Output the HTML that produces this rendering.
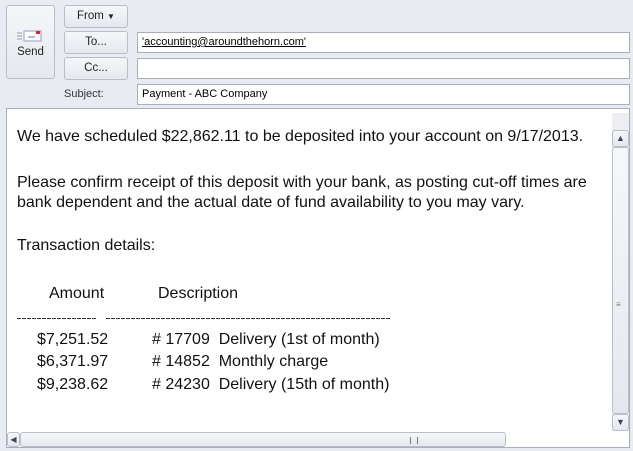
<!DOCTYPE html>
<html><head><style>
body{margin:0;width:633px;height:451px;background:#e8ecf2;font-family:"Liberation Sans",sans-serif;position:relative;overflow:hidden}
.a{position:absolute}
.btn{position:absolute;border:1px solid #b8bfc9;border-radius:3px;background:linear-gradient(#f6f7f9,#e4e8ee);font-size:11.5px;color:#222;text-align:center;box-sizing:border-box}
.fld{position:absolute;left:137px;width:493px;height:21px;background:#fff;border:1px solid #a9afb8;box-sizing:border-box;font-size:11px;padding:3px 4px}
.t{position:absolute;font-size:16px;color:#111;white-space:nowrap}
.dash{position:absolute;height:1px;background:repeating-linear-gradient(90deg,#333 0 4px,transparent 4px 5px)}
</style></head><body>
<div class="btn" style="left:6px;top:5px;width:49px;height:74px">
<svg width="30" height="16" style="position:absolute;left:9px;top:22px"><rect x="8" y="3" width="17" height="10" fill="#fff" stroke="#8ea0b8"/><line x1="12" y1="9" x2="19" y2="9" stroke="#6080a8"/><rect x="20" y="3" width="4" height="3" fill="#d23"/><line x1="1" y1="5" x2="6" y2="5" stroke="#99a"/><line x1="1" y1="8" x2="6" y2="8" stroke="#99a"/><line x1="1" y1="11" x2="6" y2="11" stroke="#99a"/></svg>
<div style="position:absolute;top:40px;width:100%">Send</div></div>
<div class="btn" style="left:64px;top:5px;width:64px;height:23px;line-height:21px">From <span style="font-size:8px">&#9660;</span></div>
<div class="btn" style="left:64px;top:31px;width:64px;height:23px;line-height:21px">To...</div>
<div class="btn" style="left:64px;top:57px;width:64px;height:23px;line-height:21px">Cc...</div>
<div class="fld" style="top:32px"><span style="text-decoration:underline">'accounting@aroundthehorn.com'</span></div>
<div class="fld" style="top:58px"></div>
<div class="a" style="left:64px;top:88px;font-size:11px;color:#333">Subject:</div>
<div class="fld" style="top:84px">Payment - ABC Company</div>
<div class="a" style="left:6px;top:108px;width:624px;height:340px;background:#fff;border:1px solid #a9afb8;box-sizing:border-box"></div>
<div class="a" style="left:612px;top:113px;width:17px;height:318px;background:#eceef1"></div>
<div class="btn" style="left:612px;top:130px;width:17px;height:17px;font-size:9px;line-height:15px;color:#445">&#9650;</div>
<div class="btn" style="left:612px;top:147px;width:17px;height:267px"></div>
<div class="btn" style="left:612px;top:414px;width:17px;height:17px;font-size:9px;line-height:15px;color:#445">&#9660;</div>
<div class="a" style="left:616px;top:300px;font-size:8px;color:#777">&#8801;</div>
<div class="btn" style="left:7px;top:432px;width:13px;height:15px;font-size:8px;line-height:13px;color:#445">&#9664;</div>
<div class="btn" style="left:20px;top:432px;width:486px;height:15px"></div>
<div class="a" style="left:410px;top:437px;width:6px;height:7px;border-left:1px solid #777;border-right:1px solid #777"></div>
<div class="t" style="left:17px;top:128px">We have scheduled $22,862.11 to be deposited into your account on 9/17/2013.</div>
<div class="t" style="left:17px;top:174px">Please confirm receipt of this deposit with your bank, as posting cut-off times are</div>
<div class="t" style="left:17px;top:194px">bank dependent and the actual date of fund availability to you may vary.</div>
<div class="t" style="left:17px;top:237px">Transaction details:</div>
<div class="t" style="left:49px;top:285px">Amount</div>
<div class="t" style="left:158px;top:285px">Description</div>
<div class="dash" style="left:17px;top:318px;width:80px"></div>
<div class="dash" style="left:106px;top:318px;width:284px"></div>
<div class="t" style="left:37px;top:331px">$7,251.52</div>
<div class="t" style="left:37px;top:353px">$6,371.97</div>
<div class="t" style="left:37px;top:376px">$9,238.62</div>
<div class="t" style="left:152px;top:331px"># 17709&nbsp; Delivery (1st of month)</div>
<div class="t" style="left:152px;top:353px"># 14852&nbsp; Monthly charge</div>
<div class="t" style="left:152px;top:376px"># 24230&nbsp; Delivery (15th of month)</div>
</body></html>
